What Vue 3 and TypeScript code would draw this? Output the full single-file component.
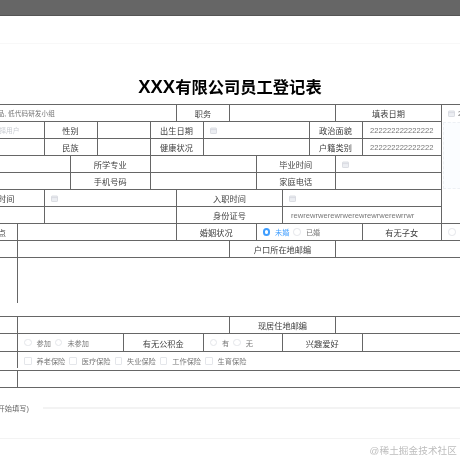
<script setup lang="ts">
interface Opt { label: string; on?: boolean }
interface Cell {
  c: [number, number]
  r: number
  rs?: number
  t?: string
  k?: 'label' | 'val' | 'ph' | 'date' | 'radios' | 'checks' | 'upload' | 'code' | 'blank'
  cls?: string
  opts?: Opt[]
}

const rowHeights = [17, 17, 17, 17, 17, 17, 17, 17, 17, 58, 18, 18, 18, 18]

const cells: Cell[] = [
  { c: [0, 8], r: 1, k: 'val', t: '产品, 低代码研发小组', cls: 'first-val' },
  { c: [8, 10], r: 1, t: '职务' },
  { c: [10, 14], r: 1, k: 'blank' },
  { c: [14, 18], r: 1, t: '填表日期' },
  { c: [18, 20], r: 1, k: 'date', t: '2022-05-01', cls: 'no-bottom' },

  { c: [0, 3], r: 2, k: 'ph', t: '请选择用户', cls: 'first-ph' },
  { c: [3, 5], r: 2, t: '性别' },
  { c: [5, 7], r: 2, k: 'blank' },
  { c: [7, 9], r: 2, t: '出生日期' },
  { c: [9, 13], r: 2, k: 'date' },
  { c: [13, 15], r: 2, t: '政治面貌' },
  { c: [15, 18], r: 2, k: 'code', t: '222222222222222' },
  { c: [18, 20], r: 2, rs: 6, k: 'upload' },

  { c: [0, 3], r: 3, k: 'blank' },
  { c: [3, 5], r: 3, t: '民族' },
  { c: [5, 7], r: 3, k: 'blank' },
  { c: [7, 9], r: 3, t: '健康状况' },
  { c: [9, 13], r: 3, k: 'blank' },
  { c: [13, 15], r: 3, t: '户籍类别' },
  { c: [15, 18], r: 3, k: 'code', t: '222222222222222' },

  { c: [0, 4], r: 4, k: 'blank' },
  { c: [4, 7], r: 4, t: '所学专业' },
  { c: [7, 11], r: 4, k: 'blank' },
  { c: [11, 14], r: 4, t: '毕业时间' },
  { c: [14, 18], r: 4, k: 'date' },

  { c: [0, 4], r: 5, k: 'blank' },
  { c: [4, 7], r: 5, t: '手机号码' },
  { c: [7, 11], r: 5, k: 'blank' },
  { c: [11, 14], r: 5, t: '家庭电话' },
  { c: [14, 18], r: 5, k: 'blank' },

  { c: [0, 3], r: 6, t: '参加工作时间', cls: 'clip-time' },
  { c: [3, 8], r: 6, k: 'date' },
  { c: [8, 12], r: 6, t: '入职时间' },
  { c: [12, 18], r: 6, k: 'date' },

  { c: [0, 3], r: 7, k: 'blank' },
  { c: [3, 8], r: 7, k: 'blank' },
  { c: [8, 12], r: 7, t: '身份证号' },
  { c: [12, 18], r: 7, k: 'val', t: 'rewrewrwerewrwerewrewrwerewrrwr', cls: 'id-val' },

  { c: [0, 2], r: 8, t: '出生地点', cls: 'clip-place' },
  { c: [2, 8], r: 8, k: 'blank' },
  { c: [8, 11], r: 8, t: '婚姻状况' },
  { c: [11, 15], r: 8, k: 'radios', opts: [{ label: '未婚', on: true }, { label: '已婚' }] },
  { c: [15, 18], r: 8, t: '有无子女' },
  { c: [18, 20], r: 8, k: 'radios', opts: [{ label: '有' }] },

  { c: [0, 2], r: 9, k: 'blank' },
  { c: [2, 10], r: 9, k: 'blank' },
  { c: [10, 14], r: 9, t: '户口所在地邮编' },
  { c: [14, 20], r: 9, k: 'blank' },

  { c: [0, 2], r: 10, k: 'blank', cls: 'stub-long' },

  { c: [0, 2], r: 11, k: 'blank', cls: 'top' },
  { c: [2, 10], r: 11, k: 'blank', cls: 'top' },
  { c: [10, 14], r: 11, t: '现居住地邮编', cls: 'top' },
  { c: [14, 20], r: 11, k: 'blank', cls: 'top' },

  { c: [0, 2], r: 12, k: 'blank' },
  { c: [2, 6], r: 12, k: 'radios', opts: [{ label: '参加' }, { label: '未参加' }] },
  { c: [6, 9], r: 12, t: '有无公积金' },
  { c: [9, 12], r: 12, k: 'radios', opts: [{ label: '有' }, { label: '无' }] },
  { c: [12, 15], r: 12, t: '兴趣爱好' },
  { c: [15, 20], r: 12, k: 'blank' },

  { c: [0, 2], r: 13, k: 'blank', cls: 'stub-short' },
  {
    c: [2, 20],
    r: 13,
    k: 'checks',
    cls: 'no-bottom',
    opts: [{ label: '养老保险' }, { label: '医疗保险' }, { label: '失业保险' }, { label: '工作保险' }, { label: '生育保险' }],
  },

  { c: [0, 2], r: 14, k: 'blank', cls: 'top' },
  { c: [2, 20], r: 14, k: 'blank', cls: 'top' },
]

const gridStyle = { gridTemplateRows: rowHeights.map((h) => `${h}px`).join(' ') }

function place(cell: Cell) {
  return {
    gridColumn: `${cell.c[0] + 1} / ${cell.c[1] + 1}`,
    gridRow: `${cell.r} / span ${cell.rs ?? 1}`,
  }
}
</script>

<template>
  <div class="page">
    <div class="topbar"></div>
    <div class="subbar"></div>
    <h1 class="title"><span class="xxx">XXX</span>有限公司员工登记表</h1>

    <div class="sheet" :style="gridStyle">
      <div
        v-for="(cell, i) in cells"
        :key="i"
        class="cell"
        :class="[cell.k ?? 'label', cell.cls]"
        :style="place(cell)"
      >
        <template v-if="cell.k === 'date'">
          <svg class="cal" viewBox="0 0 7 7">
            <rect x="0.5" y="1" width="6" height="5.5" rx="0.6" fill="#eceef2" stroke="#d4d7dd" stroke-width="0.8" />
            <path d="M0.5 2.6H6.5" stroke="#d4d7dd" stroke-width="0.8" />
          </svg>
          <span v-if="cell.t" class="date-text">{{ cell.t }}</span>
        </template>
        <template v-else-if="cell.k === 'radios'">
          <label v-for="o in cell.opts" :key="o.label" class="opt" :class="{ on: o.on }">
            <i class="dot"></i><span>{{ o.label }}</span>
          </label>
        </template>
        <template v-else-if="cell.k === 'checks'">
          <label v-for="o in cell.opts" :key="o.label" class="opt">
            <i class="box"></i><span>{{ o.label }}</span>
          </label>
        </template>
        <div v-else-if="cell.k === 'upload'" class="drop"></div>
        <span v-else-if="cell.t" class="txt">{{ cell.t }}</span>
      </div>
    </div>

    <div class="foot">
      <span class="foot-label"><span>(从此处开始填写)</span></span>
      <span class="foot-line"></span>
    </div>
    <div class="bottom-line"></div>
    <div class="mark">@稀土掘金技术社区</div>
  </div>
</template>

<style scoped>
.page {
  position: relative;
  width: 460px;
  height: 460px;
  overflow: hidden;
  background: #fff;
  font-family: "Liberation Sans", "Noto Sans CJK SC", sans-serif;
  color: #444;
  filter: blur(0.25px);
}
.topbar {
  height: 15px;
  background: #666;
  border-bottom: 1px solid #555;
}
.subbar {
  height: 27px;
  border-bottom: 1px solid #f8f8f8;
}
.title {
  margin: 33px 0 7px;
  height: 20px;
  line-height: 20px;
  text-align: center;
  font-size: 16.3px;
  font-weight: 700;
  color: #000;
}
.xxx {
  font-size: 18.4px;
}
.sheet {
  display: grid;
  grid-template-columns: repeat(20, 26.5px);
  width: 530px;
  margin-left: -35px;
  border-top: 1px solid #666;
}
.cell {
  box-sizing: border-box;
  border-right: 1px solid #666;
  border-bottom: 1px solid #666;
  display: flex;
  align-items: center;
  min-width: 0;
  white-space: nowrap;
  font-size: 8.2px;
}
.label {
  justify-content: center;
  color: #3f3f3f;
}
.val,
.date,
.code {
  color: #777;
  font-size: 7.6px;
}
.code {
  justify-content: center;
}
.ph {
  color: #c8cbd1;
  font-size: 6.7px;
}
.first-val {
  padding-left: 26px;
  font-size: 6.7px;
}
.first-ph {
  justify-content: flex-end;
  padding-right: 24px;
}
.clip-time {
  justify-content: flex-end;
  padding-right: 29px;
}
.clip-place {
  justify-content: flex-end;
  padding-right: 11px;
}
.id-val {
  padding-left: 8px;
}
.date {
  padding-left: 6px;
  gap: 3px;
}
.cal {
  width: 7px;
  height: 7px;
  flex: none;
}
.no-bottom {
  border-bottom: none;
}
.top {
  border-top: 1px solid #666;
}
.stub-long {
  align-self: start;
  height: 45px;
  border-bottom: none;
}
.stub-short {
  align-self: start;
  height: 16px;
  border-bottom: none;
}
.radios,
.checks {
  padding-left: 6px;
  gap: 4px;
}
.opt {
  display: flex;
  align-items: center;
  gap: 5px;
  color: #777;
  font-size: 7.2px;
}
.opt.on {
  color: #409eff;
}
.dot,
.box {
  box-sizing: border-box;
  display: block;
  width: 7.5px;
  height: 7.5px;
  border: 0.7px solid #e4e6ea;
  background: #fff;
}
.dot {
  border-radius: 50%;
}
.box {
  border-radius: 1px;
}
.opt.on .dot {
  border: 2.4px solid #409eff;
}
.upload {
  align-items: flex-start;
}
.drop {
  box-sizing: border-box;
  width: 100%;
  margin-left: 0.5px;
  height: 67px;
  background: #fbfdff;
  border: 1px dashed #edf0f4;
}
.foot {
  display: flex;
  align-items: center;
  margin-top: 14px;
  height: 12px;
}
.foot-label {
  display: flex;
  justify-content: flex-end;
  width: 29px;
  flex: none;
  white-space: nowrap;
  font-size: 7.3px;
  color: #666;
}
.foot-line {
  flex: 1;
  height: 2px;
  margin-left: 14px;
  background: #f3f3f3;
}
.bottom-line {
  margin-top: 24px;
  height: 1px;
  background: #f3f3f3;
}
.mark {
  position: absolute;
  right: 3px;
  bottom: 2px;
  font-size: 9.6px;
  line-height: 14px;
  letter-spacing: 0.1px;
  color: #bdbdbd;
}
</style>
